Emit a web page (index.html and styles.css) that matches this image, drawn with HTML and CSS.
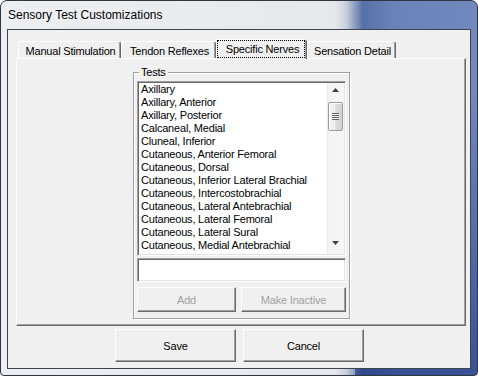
FILE: index.html
```html
<!DOCTYPE html>
<html lang="en">
<head>
    <meta charset="UTF-8">
    <title>Sensory Test Customizations</title>
    <link rel="stylesheet" href="styles.css">
</head>
<body>
    <div class="window">
        <div class="titlebar">Sensory Test Customizations</div>
        <div class="client">
            <div class="tabs">
                <div class="tab tab-manual"><span class="tab-label">Manual Stimulation</span></div>
                <div class="tab tab-tendon"><span class="tab-label">Tendon Reflexes</span></div>
                <div class="tab tab-nerves active"><span class="tab-label">Specific Nerves</span></div>
                <div class="tab tab-detail"><span class="tab-label">Sensation Detail</span></div>
            </div>
            <div class="panel">
                <div class="group">
                    <div class="legend">Tests</div>
                    <div class="listbox">
                        <ul class="items">
                            <li>Axillary</li>
                            <li>Axillary, Anterior</li>
                            <li>Axillary, Posterior</li>
                            <li>Calcaneal, Medial</li>
                            <li>Cluneal, Inferior</li>
                            <li>Cutaneous, Anterior Femoral</li>
                            <li>Cutaneous, Dorsal</li>
                            <li>Cutaneous, Inferior Lateral Brachial</li>
                            <li>Cutaneous, Intercostobrachial</li>
                            <li>Cutaneous, Lateral Antebrachial</li>
                            <li>Cutaneous, Lateral Femoral</li>
                            <li>Cutaneous, Lateral Sural</li>
                            <li>Cutaneous, Medial Antebrachial</li>
                        </ul>
                        <div class="scrollbar">
                            <div class="arrow arrow-up">
                                <svg width="7" height="4" viewBox="0 0 7 4"><polygon points="0,4 3.5,0 7,4" fill="#404040"/></svg>
                            </div>
                            <div class="track">
                                <div class="thumb"><span class="grip"></span></div>
                            </div>
                            <div class="arrow arrow-down">
                                <svg width="7" height="4" viewBox="0 0 7 4"><polygon points="0,0 7,0 3.5,4" fill="#404040"/></svg>
                            </div>
                        </div>
                    </div>
                    <input class="textbox" type="text">
                    <div class="group-buttons">
                        <button class="btn btn-add" disabled>Add</button>
                        <button class="btn btn-inactive" disabled>Make Inactive</button>
                    </div>
                </div>
            </div>
            <div class="actions">
                <button class="btn btn-big">Save</button>
                <button class="btn btn-big">Cancel</button>
            </div>
        </div>
    </div>
</body>
</html>
```

FILE: styles.css
```css
* {
    box-sizing: border-box;
}
body {
    margin: 0;
    font-family: "Liberation Sans", Arial, sans-serif;
}
.window {
    width: 478px;
    height: 376px;
    border: 1px solid #30363d;
    border-radius: 7px 7px 4px 4px;
    overflow: hidden;
    background:
        linear-gradient(to bottom, rgba(20, 45, 120, 0) 25%, rgba(20, 45, 120, 0.6) 100%) right top / 122px 100% no-repeat,
        linear-gradient(to right, #eceef1 0, #e6e9ec 70%, #c9d0dc 72.5%, #5571a9 76%, #6a82b8 82%, #7189bd 100%);
}
.titlebar {
    height: 28px;
    line-height: 28px;
    padding-left: 7px;
    font-size: 12px;
    color: #000;
    text-shadow: 0 0 6px #fff;
}
.client {
    margin: 0 6px;
    height: 340px;
    border: 1px solid #3b4450;
    background: #f0f0f0;
    padding-top: 9px;
}
.tabs {
    display: flex;
    align-items: flex-end;
    height: 19px;
    margin-left: 10px;
}
.tab {
    height: 17px;
    border: 1px solid;
    border-bottom: 0;
    border-color: #fff #696969 transparent #fff;
    border-radius: 3px 3px 0 0;
    box-shadow: inset -1px 0 #a0a0a0;
    background: #f0f0f0;
    font-size: 11px;
    letter-spacing: -0.2px;
    text-align: center;
}
.tab-label {
    display: block;
    height: 16px;
    margin-right: 1px;
    padding: 2px 0 0 3px;
    border: 1px solid transparent;
    border-bottom: 0;
    line-height: 13px;
    white-space: nowrap;
}
.tab-manual { width: 103px; }
.tab-tendon { width: 95px; }
.tab-nerves { width: 91px; }
.tab-detail { width: 89px; }
.tab.active {
    height: 20px;
    margin-bottom: -1px;
    position: relative;
    z-index: 1;
}
.tab.active .tab-label {
    height: 18px;
    border: 1px dotted #000;
}
.panel {
    width: 450px;
    height: 268px;
    margin-left: 8px;
    border: 1px solid;
    border-color: #fff #696969 #696969 #fff;
    box-shadow: inset -1px -1px #a0a0a0;
    padding: 13px 0 0 116px;
}
.group {
    width: 217px;
    border: 1px solid #a0a0a0;
    box-shadow: 1px 1px 0 #fff, inset 1px 1px 0 #fff;
    padding: 0 3px 6px 3px;
    font-size: 11px;
    letter-spacing: -0.2px;
}
.legend {
    width: fit-content;
    margin: -7px 0 0 2px;
    padding: 0 2px;
    line-height: 13px;
    background: #f0f0f0;
}
.listbox {
    display: flex;
    height: 175px;
    margin-top: 2px;
    border: 1px solid;
    border-color: #a0a0a0 #fff #fff #a0a0a0;
    box-shadow: inset 1px 1px #696969, inset -1px -1px #e3e3e3;
    background: #fff;
    padding: 1px;
}
.items {
    flex: 1;
    margin: 0;
    padding: 0 0 0 2px;
    list-style: none;
    overflow: hidden;
}
.items li {
    line-height: 13px;
    white-space: nowrap;
}
.scrollbar {
    width: 17px;
    display: flex;
    flex-direction: column;
    background: linear-gradient(to right, #e4e4e4 0, #f3f3f3 1px, #f6f6f6 100%);
}
.arrow {
    height: 17px;
    display: flex;
    justify-content: center;
}
.arrow svg {
    display: block;
}
.arrow-up svg {
    margin-top: 5px;
}
.arrow-down svg {
    margin-top: 4px;
}
.track {
    flex: 1;
    padding: 2px 1px 0 1px;
}
.thumb {
    height: 29px;
    border: 1px solid #9b9b9b;
    border-radius: 2px;
    background: linear-gradient(to right, #f7f7f7 0, #ececec 45%, #dcdcdc 55%, #d2d2d2 100%);
    box-shadow: inset 1px 1px #fff;
    display: flex;
    align-items: center;
    justify-content: center;
}
.grip {
    width: 7px;
    height: 7px;
    background: repeating-linear-gradient(to bottom, #626262 0 1px, #f4f4f4 1px 2px);
}
.textbox {
    display: block;
    width: 100%;
    height: 24px;
    margin: 2px 0 0 0;
    padding: 0 3px;
    border: 1px solid;
    border-color: #a0a0a0 #fff #fff #a0a0a0;
    box-shadow: inset 1px 1px #696969, inset -1px -1px #e3e3e3;
    background: #fff;
    outline: none;
    font: 11px "Liberation Sans", Arial, sans-serif;
}
.group-buttons {
    display: flex;
    gap: 5px;
    margin-top: 5px;
}
.btn {
    height: 25px;
    padding: 0;
    background: #f0f0f0;
    border: 1px solid;
    border-color: #fff #696969 #696969 #fff;
    box-shadow: inset -1px -1px #a0a0a0;
    color: #000;
    font: 11px "Liberation Sans", Arial, sans-serif;
    letter-spacing: -0.2px;
}
.btn:disabled {
    color: #a0a0a0;
}
.btn-add { width: 99px; }
.btn-inactive { width: 105px; }
.actions {
    display: flex;
    justify-content: center;
    gap: 7px;
    margin-top: 3px;
    padding-left: 1px;
}
.btn-big {
    width: 121px;
    height: 33px;
}
```
